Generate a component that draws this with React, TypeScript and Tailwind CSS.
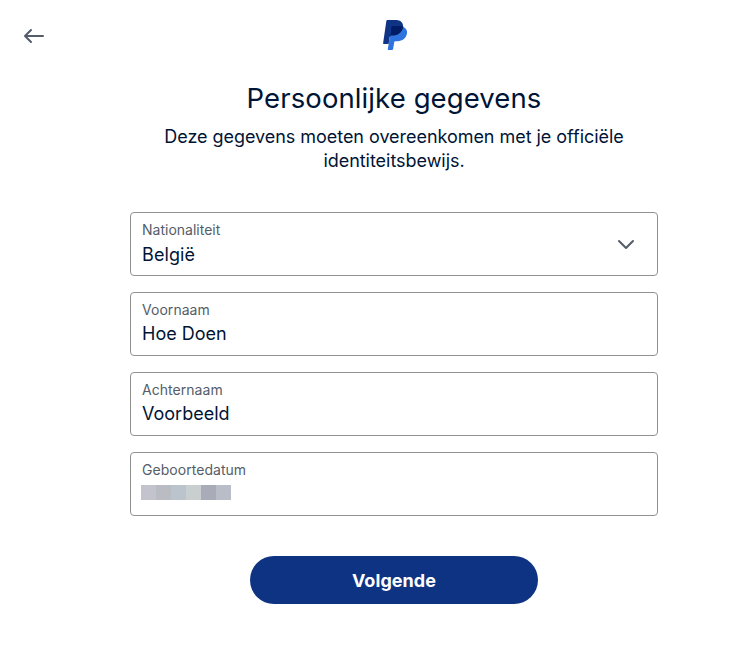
import React from "react";

function PayPalMark() {
  return (
    <svg width="24" height="30" viewBox="0 0 24 30" aria-hidden="true">
      <path
        d="M20.200 6.700c0 5.600-4.500 10.400-11.200 10.400H6.700L5.600 24H.8c-.5 0-.8-.4-.7-.8L3.300 1.200C3.400.5 4 0 4.700 0h8.700c4.100 0 6.800 2.800 6.800 6.700z"
        fill="#0f3385"
      />
      <path
        d="M20.200 6.700c2.700 1.300 4.200 3.700 3.800 6.600-.7 4.900-4.600 7.900-9.400 7.900h-2.300c-.6 0-1 .4-1.100 1l-1.100 6.900c-.1.500-.5.900-1 .9H5.400c-.5 0-.7-.4-.6-.8L8.100 8.200z"
        fill="#2f73df"
      />
      <path
        d="M8.300 7.300C8.500 6.500 9.100 6 9.800 6h6.700c1.400 0 2.700.2 3.700.7-.5 4.300-4.100 8.600-9.900 8.800H8.600c-.7 0-1.300.4-1.700 1z"
        fill="#001c64"
      />
    </svg>
  );
}

function Field({ label, children }: { label: string; children: React.ReactNode }) {
  return (
    <div className="flex h-16 flex-col rounded-[4px] border border-[#909191] pl-[11px] pt-[8px]">
      <div className="text-[14px] leading-[18px] tracking-[0.04px] text-[#545d68]">{label}</div>
      {children}
    </div>
  );
}

const valueClass = "mt-[3px] text-[18px] leading-[24px] text-[#001435]";

export default function App() {
  return (
    <main className="h-[652px] w-[752px] bg-white pt-5 font-['Inter','Liberation_Sans',sans-serif] text-[#001435]">
      <header className="flex h-[30px] items-start">
        <svg className="ml-[23px] mt-[8px]" width="22" height="16" viewBox="0 0 22 16" fill="none" stroke="#545d68" strokeWidth="2" strokeLinecap="round" strokeLinejoin="round">
          <path d="M20 8H2M8 2L2 8l6 6" />
        </svg>
        <div className="ml-[338px]">
          <PayPalMark />
        </div>
      </header>
      <section className="ml-[130px] w-[528px]">
        <h1 className="mt-[30px] text-center text-[27.5px] leading-[36px] tracking-[0.1px]">Persoonlijke gegevens</h1>
        <p className="mt-[9px] text-center text-[18px] leading-[24px] tracking-[-0.04px]">
          Deze gegevens moeten overeenkomen met je officiële
          <br />
          identiteitsbewijs.
        </p>
        <div className="mt-[39px] flex flex-col gap-4">
          <div className="flex h-16 items-start justify-between rounded-[4px] border border-[#909191] pl-[11px] pr-[22px] pt-[8px]">
            <div>
              <div className="text-[14px] leading-[18px] text-[#545d68]">Nationaliteit</div>
              <div className="mt-[4px] text-[18px] leading-[24px] tracking-[0.1px]">België</div>
            </div>
            <svg className="mt-[18px]" width="18" height="11" viewBox="0 0 18 11" fill="none" stroke="#545d68" strokeWidth="2" strokeLinecap="round" strokeLinejoin="round">
              <path d="M2 2l7 7 7-7" />
            </svg>
          </div>
          <Field label="Voornaam">
            <div className={valueClass}>Hoe Doen</div>
          </Field>
          <Field label="Achternaam">
            <div className={valueClass}>Voorbeeld</div>
          </Field>
          <Field label="Geboortedatum">
            <div className="-ml-px mt-[6px] flex h-[15px]">
              <span className="w-[15px] bg-[#c3c3ce]" />
              <span className="w-[15px] bg-[#b9bcc2]" />
              <span className="w-[15px] bg-[#bbc3cd]" />
              <span className="w-[15px] bg-[#c9cece]" />
              <span className="w-[15px] bg-[#a9abb8]" />
              <span className="w-[15px] bg-[#b9bdc7]" />
            </div>
          </Field>
        </div>
        <button className="mx-auto mt-10 block h-12 w-[288px] rounded-full bg-[#0f3383] pt-[2px] text-[18px] font-bold leading-[24px] tracking-[0.05px] text-white">
          Volgende
        </button>
      </section>
    </main>
  );
}
